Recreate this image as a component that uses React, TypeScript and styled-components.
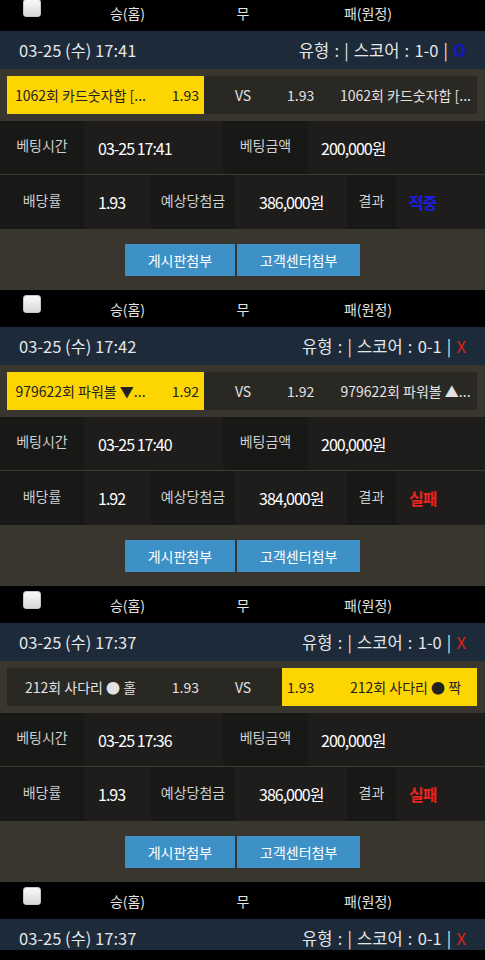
import React from "react";
import styled, { createGlobalStyle } from "styled-components";

const GlobalStyle = createGlobalStyle`
  html, body {
    margin: 0;
    padding: 0;
    background: #000;
    overflow: hidden;
  }
  body {
    font-family: "Noto Sans CJK KR", "Noto Sans", sans-serif;
    -webkit-font-smoothing: antialiased;
  }
`;

const Page = styled.div`
  display: flex;
  flex-direction: column;
  height: 100vh;
`;

const List = styled.div`
  flex: 1;
  min-height: 0;
  display: flex;
  flex-direction: column;
  margin-top: -6px;
  overflow: hidden;
`;

const Block = styled.section`
  display: flex;
  flex-direction: column;
  flex: none;
`;

const HeaderRow = styled.div`
  display: grid;
  grid-template-columns: 64px 127px 104px 146px 1fr;
  align-items: center;
  height: 37px;
  background: #000;
  color: #e4e4e4;
  font-size: 14px;
`;

const HeaderCell = styled.div`
  text-align: center;
`;

const CheckCell = styled.div`
  display: flex;
  justify-content: center;
  align-self: start;
  padding-top: 5px;
`;

const Check = styled.input`
  appearance: none;
  margin: 0;
  width: 18px;
  height: 18px;
  border-radius: 3px;
  background: linear-gradient(#fafafa, #d9d9d9);
  border: 1px solid #c8c8c8;
  box-sizing: border-box;
`;

const InfoBar = styled.div`
  display: flex;
  justify-content: space-between;
  align-items: center;
  height: 38px;
  flex: none;
  padding: 0 19px;
  background: #1c2a39;
  color: #e6e6e6;
  font-size: 16.5px;
`;

const Summary = styled.span`
  word-spacing: 1.5px;
`;

const Mark = styled.span<{ $win: boolean }>`
  color: ${(p) => (p.$win ? "#1418c4" : "#d8261e")};
  font-weight: ${(p) => (p.$win ? 700 : 400)};
`;

const MatchArea = styled.div`
  padding: 7px 8px 7px 7px;
  background: #38362e;
`;

const MatchRow = styled.div`
  display: grid;
  grid-template-columns: 197px 78px 1fr;
  height: 38px;
  font-size: 14px;
  color: #e2e2e2;
`;

const Side = styled.div<{ $picked: boolean }>`
  display: flex;
  align-items: center;
  min-width: 0;
  background: ${(p) => (p.$picked ? "#fdd500" : "#2a2823")};
  color: ${(p) => (p.$picked ? "#222" : "#e2e2e2")};
`;

const TeamName = styled.span<{ $pad: string }>`
  flex: 1;
  min-width: 0;
  padding: ${(p) => p.$pad};
  text-align: center;
  white-space: nowrap;
  overflow: hidden;
  text-overflow: ellipsis;
`;

const Odds = styled.span<{ $align: "left" | "right"; $w: number }>`
  width: ${(p) => p.$w}px;
  flex: none;
  box-sizing: border-box;
  text-align: ${(p) => p.$align};
  padding: 0 5px;
`;

const VsCell = styled.div`
  display: flex;
  align-items: center;
  justify-content: center;
  background: #2a2823;
`;

const DetailRow = styled.div<{ $h: number; $line?: boolean }>`
  display: flex;
  height: ${(p) => p.$h}px;
  border-bottom: ${(p) => (p.$line ? "1px solid #3c3b37" : "none")};
`;

const Label = styled.div<{ $w: number }>`
  width: ${(p) => p.$w}px;
  flex: none;
  display: flex;
  align-items: center;
  justify-content: center;
  padding-bottom: 5px;
  box-sizing: border-box;
  background: #181816;
  color: #cfcfcf;
  font-size: 14px;
`;

const Value = styled.div<{ $w?: number; $pl?: number; $color?: string; $bold?: boolean }>`
  ${(p) => (p.$w ? `width: ${p.$w}px; flex: none;` : "flex: 1;")}
  display: flex;
  align-items: center;
  padding-left: ${(p) => p.$pl ?? 14}px;
  box-sizing: border-box;
  background: #1e1d1b;
  color: ${(p) => p.$color ?? "#fff"};
  font-weight: ${(p) => (p.$bold ? 700 : 400)};
  font-size: 16px;
  letter-spacing: -1px;
`;

const ButtonArea = styled.div`
  display: flex;
  justify-content: center;
  gap: 2px;
  padding: 15px 0 14px;
  background: #38362e;
`;

const ActionButton = styled.button`
  height: 32px;
  padding: 0 23px;
  border: none;
  border-radius: 0;
  background: #3d91c6;
  color: #fff;
  font-family: inherit;
  font-size: 14px;
`;

const BottomBar = styled.div`
  height: 10px;
  flex: none;
  background: #000;
`;

type Bet = {
  date: string;
  score: string;
  win: boolean;
  home: { name: string; odds: string };
  away: { name: string; odds: string };
  pick: "home" | "away";
  betTime: string;
  amount: string;
  rate: string;
  expected: string;
  result: string;
};

const bets: Bet[] = [
  {
    date: "03-25 (수) 17:41",
    score: "1-0",
    win: true,
    home: { name: "1062회 카드숫자합 [...", odds: "1.93" },
    away: { name: "1062회 카드숫자합 [...", odds: "1.93" },
    pick: "home",
    betTime: "03-25 17:41",
    amount: "200,000원",
    rate: "1.93",
    expected: "386,000원",
    result: "적중",
  },
  {
    date: "03-25 (수) 17:42",
    score: "0-1",
    win: false,
    home: { name: "979622회 파워볼 ▼...", odds: "1.92" },
    away: { name: "979622회 파워볼 ▲...", odds: "1.92" },
    pick: "home",
    betTime: "03-25 17:40",
    amount: "200,000원",
    rate: "1.92",
    expected: "384,000원",
    result: "실패",
  },
  {
    date: "03-25 (수) 17:37",
    score: "1-0",
    win: false,
    home: { name: "212회 사다리 ● 홀", odds: "1.93" },
    away: { name: "212회 사다리 ● 짝", odds: "1.93" },
    pick: "away",
    betTime: "03-25 17:36",
    amount: "200,000원",
    rate: "1.93",
    expected: "386,000원",
    result: "실패",
  },
  {
    date: "03-25 (수) 17:37",
    score: "0-1",
    win: false,
    home: { name: "212회 사다리 ● 홀", odds: "1.93" },
    away: { name: "212회 사다리 ● 짝", odds: "1.93" },
    pick: "home",
    betTime: "03-25 17:36",
    amount: "200,000원",
    rate: "1.93",
    expected: "386,000원",
    result: "실패",
  },
];

function BetBlock({ bet, partial }: { bet: Bet; partial?: boolean }) {
  return (
    <Block>
      <HeaderRow>
        <CheckCell>
          <Check type="checkbox" />
        </CheckCell>
        <HeaderCell>승(홈)</HeaderCell>
        <HeaderCell>무</HeaderCell>
        <HeaderCell>패(원정)</HeaderCell>
      </HeaderRow>
      <InfoBar>
        <span>{bet.date}</span>
        <Summary>
          유형 : | 스코어 : {bet.score} | <Mark $win={bet.win}>{bet.win ? "O" : "X"}</Mark>
        </Summary>
      </InfoBar>
      {!partial && (
        <>
          <MatchArea>
            <MatchRow>
              <Side $picked={bet.pick === "home"}>
                <TeamName $pad="0 0 0 6px">{bet.home.name}</TeamName>
                <Odds $align="right" $w={56}>{bet.home.odds}</Odds>
              </Side>
              <VsCell>VS</VsCell>
              <Side $picked={bet.pick === "away"}>
                <Odds $align="left" $w={50}>{bet.away.odds}</Odds>
                <TeamName $pad="0 0 0 2px">{bet.away.name}</TeamName>
              </Side>
            </MatchRow>
          </MatchArea>
          <DetailRow $h={53} $line>
            <Label $w={84}>베팅시간</Label>
            <Value $w={139}>{bet.betTime}</Value>
            <Label $w={85}>베팅금액</Label>
            <Value $pl={13}>{bet.amount}</Value>
          </DetailRow>
          <DetailRow $h={54}>
            <Label $w={84}>배당률</Label>
            <Value $w={67}>{bet.rate}</Value>
            <Label $w={84}>예상당첨금</Label>
            <Value $w={112} $pl={24}>{bet.expected}</Value>
            <Label $w={49}>결과</Label>
            <Value $pl={13} $bold $color={bet.win ? "#1a1ee0" : "#e8261f"}>
              {bet.result}
            </Value>
          </DetailRow>
          <ButtonArea>
            <ActionButton>게시판첨부</ActionButton>
            <ActionButton>고객센터첨부</ActionButton>
          </ButtonArea>
        </>
      )}
    </Block>
  );
}

export default function App() {
  return (
    <>
      <GlobalStyle />
      <Page>
        <List>
          {bets.map((b, i) => (
            <BetBlock key={i} bet={b} partial={i === bets.length - 1} />
          ))}
        </List>
        <BottomBar />
      </Page>
    </>
  );
}
